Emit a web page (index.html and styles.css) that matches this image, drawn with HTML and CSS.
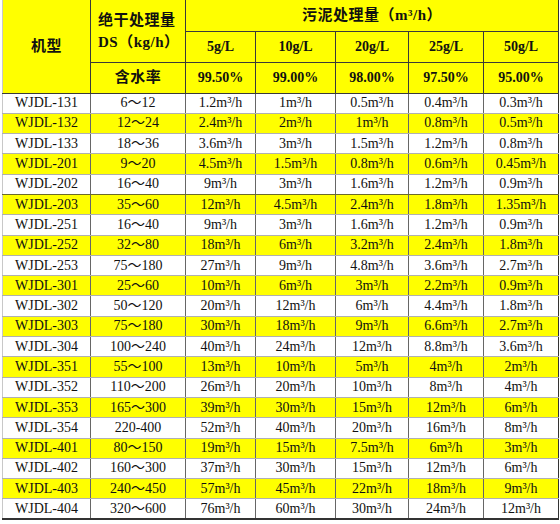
FILE: index.html
```html
<!DOCTYPE html>
<html>
<head>
<meta charset="utf-8">
<link rel="stylesheet" href="styles.css">
</head>
<body>
<table class="spec">
<colgroup>
<col class="c1"><col class="c2"><col class="c3"><col class="c4"><col class="c5"><col class="c6"><col class="c7">
</colgroup>
<thead>
<tr class="h1">
<th rowspan="3" class="cn">机型</th>
<th rowspan="2" class="cn ds">绝干处理量<br>DS（kg/h）</th>
<th colspan="5" class="cn">污泥处理量（m³/h）</th>
</tr>
<tr class="h2">
<th>5g/L</th><th>10g/L</th><th>20g/L</th><th>25g/L</th><th>50g/L</th>
</tr>
<tr class="h3">
<th class="cn">含水率</th>
<th>99.50%</th><th>99.00%</th><th>98.00%</th><th>97.50%</th><th>95.00%</th>
</tr>
</thead>
<tbody>
<tr><td>WJDL-131</td><td>6～12</td><td>1.2m³/h</td><td>1m³/h</td><td>0.5m³/h</td><td>0.4m³/h</td><td>0.3m³/h</td></tr>
<tr class="y"><td>WJDL-132</td><td>12～24</td><td>2.4m³/h</td><td>2m³/h</td><td>1m³/h</td><td>0.8m³/h</td><td>0.5m³/h</td></tr>
<tr><td>WJDL-133</td><td>18～36</td><td>3.6m³/h</td><td>3m³/h</td><td>1.5m³/h</td><td>1.2m³/h</td><td>0.8m³/h</td></tr>
<tr class="y"><td>WJDL-201</td><td>9～20</td><td>4.5m³/h</td><td>1.5m³/h</td><td>0.8m³/h</td><td>0.6m³/h</td><td>0.45m³/h</td></tr>
<tr class="dk"><td>WJDL-202</td><td>16～40</td><td>9m³/h</td><td>3m³/h</td><td>1.6m³/h</td><td>1.2m³/h</td><td>0.9m³/h</td></tr>
<tr class="y"><td>WJDL-203</td><td>35～60</td><td>12m³/h</td><td>4.5m³/h</td><td>2.4m³/h</td><td>1.8m³/h</td><td>1.35m³/h</td></tr>
<tr><td>WJDL-251</td><td>16～40</td><td>9m³/h</td><td>3m³/h</td><td>1.6m³/h</td><td>1.2m³/h</td><td>0.9m³/h</td></tr>
<tr class="y"><td>WJDL-252</td><td>32～80</td><td>18m³/h</td><td>6m³/h</td><td>3.2m³/h</td><td>2.4m³/h</td><td>1.8m³/h</td></tr>
<tr><td>WJDL-253</td><td>75～180</td><td>27m³/h</td><td>9m³/h</td><td>4.8m³/h</td><td>3.6m³/h</td><td>2.7m³/h</td></tr>
<tr class="y"><td>WJDL-301</td><td>25～60</td><td>10m³/h</td><td>6m³/h</td><td>3m³/h</td><td>2.2m³/h</td><td>0.9m³/h</td></tr>
<tr><td>WJDL-302</td><td>50～120</td><td>20m³/h</td><td>12m³/h</td><td>6m³/h</td><td>4.4m³/h</td><td>1.8m³/h</td></tr>
<tr class="y"><td>WJDL-303</td><td>75～180</td><td>30m³/h</td><td>18m³/h</td><td>9m³/h</td><td>6.6m³/h</td><td>2.7m³/h</td></tr>
<tr><td>WJDL-304</td><td>100～240</td><td>40m³/h</td><td>24m³/h</td><td>12m³/h</td><td>8.8m³/h</td><td>3.6m³/h</td></tr>
<tr class="y"><td>WJDL-351</td><td>55～100</td><td>13m³/h</td><td>10m³/h</td><td>5m³/h</td><td>4m³/h</td><td>2m³/h</td></tr>
<tr><td>WJDL-352</td><td>110～200</td><td>26m³/h</td><td>20m³/h</td><td>10m³/h</td><td>8m³/h</td><td>4m³/h</td></tr>
<tr class="y"><td>WJDL-353</td><td>165～300</td><td>39m³/h</td><td>30m³/h</td><td>15m³/h</td><td>12m³/h</td><td>6m³/h</td></tr>
<tr><td>WJDL-354</td><td>220-400</td><td>52m³/h</td><td>40m³/h</td><td>20m³/h</td><td>16m³/h</td><td>8m³/h</td></tr>
<tr class="y"><td>WJDL-401</td><td>80～150</td><td>19m³/h</td><td>15m³/h</td><td>7.5m³/h</td><td>6m³/h</td><td>3m³/h</td></tr>
<tr><td>WJDL-402</td><td>160～300</td><td>37m³/h</td><td>30m³/h</td><td>15m³/h</td><td>12m³/h</td><td>6m³/h</td></tr>
<tr class="y"><td>WJDL-403</td><td>240～450</td><td>57m³/h</td><td>45m³/h</td><td>22m³/h</td><td>18m³/h</td><td>9m³/h</td></tr>
<tr class="last"><td>WJDL-404</td><td>320～600</td><td>76m³/h</td><td>60m³/h</td><td>30m³/h</td><td>24m³/h</td><td>12m³/h</td></tr>
</tbody>
</table>
</body>
</html>
```
FILE: styles.css
```css
html, body {
  margin: 0;
  padding: 0;
  background: #ffffff;
}
.spec {
  margin-left: 2px;
  border-collapse: collapse;
  table-layout: fixed;
  width: 556px;
  font-family: "Liberation Serif", "Noto Sans CJK SC", serif;
  font-size: 14px;
  color: #111;
}
.c1 { width: 88px; }
.c2 { width: 95px; }
.c3 { width: 70px; }
.c4 { width: 80px; }
.c5 { width: 73px; }
.c6 { width: 75px; }
.c7 { width: 75px; }
.spec th {
  background: #ffff00;
  font-weight: bold;
  border: 1px solid #3a3a3a;
  padding: 0;
  text-align: center;
  vertical-align: middle;
  line-height: 17px;
}
.spec thead tr { height: 31px; }
.spec th.cn {
  font-family: "Liberation Serif", "Noto Sans CJK SC", serif;
  font-size: 15px;
  font-weight: bold;
  letter-spacing: 0.5px;
}
.spec th.ds {
  line-height: 22px;
  text-align: left;
  padding-left: 7px;
}
.spec thead tr:first-child th {
  border-top: none;
}
.spec tr th:first-child {
  border-left: 1px solid #c8c8c8;
}
.spec td {
  padding: 0;
  text-align: center;
  vertical-align: middle;
  border-left: 1px solid #666;
  border-right: 1px solid #666;
  border-top: 1px solid #b0b0b0;
  border-bottom: 1px solid #b0b0b0;
  line-height: 16px;
  white-space: nowrap;
}
.spec td:first-child {
  border-left: 1px solid #c8c8c8;
}
.spec td:last-child,
.spec th:last-child {
  border-right: 1px solid #333;
}
.spec tbody tr { height: 20.3px; }
.spec tbody tr:first-child td { border-top: 1px solid #333; }
.spec tr.y td { background: #ffff00; }
.spec tr.dk td { border-bottom: 1px solid #6b6a2a; }
.spec tr.last td { border-bottom: 2px solid #333; }
```
